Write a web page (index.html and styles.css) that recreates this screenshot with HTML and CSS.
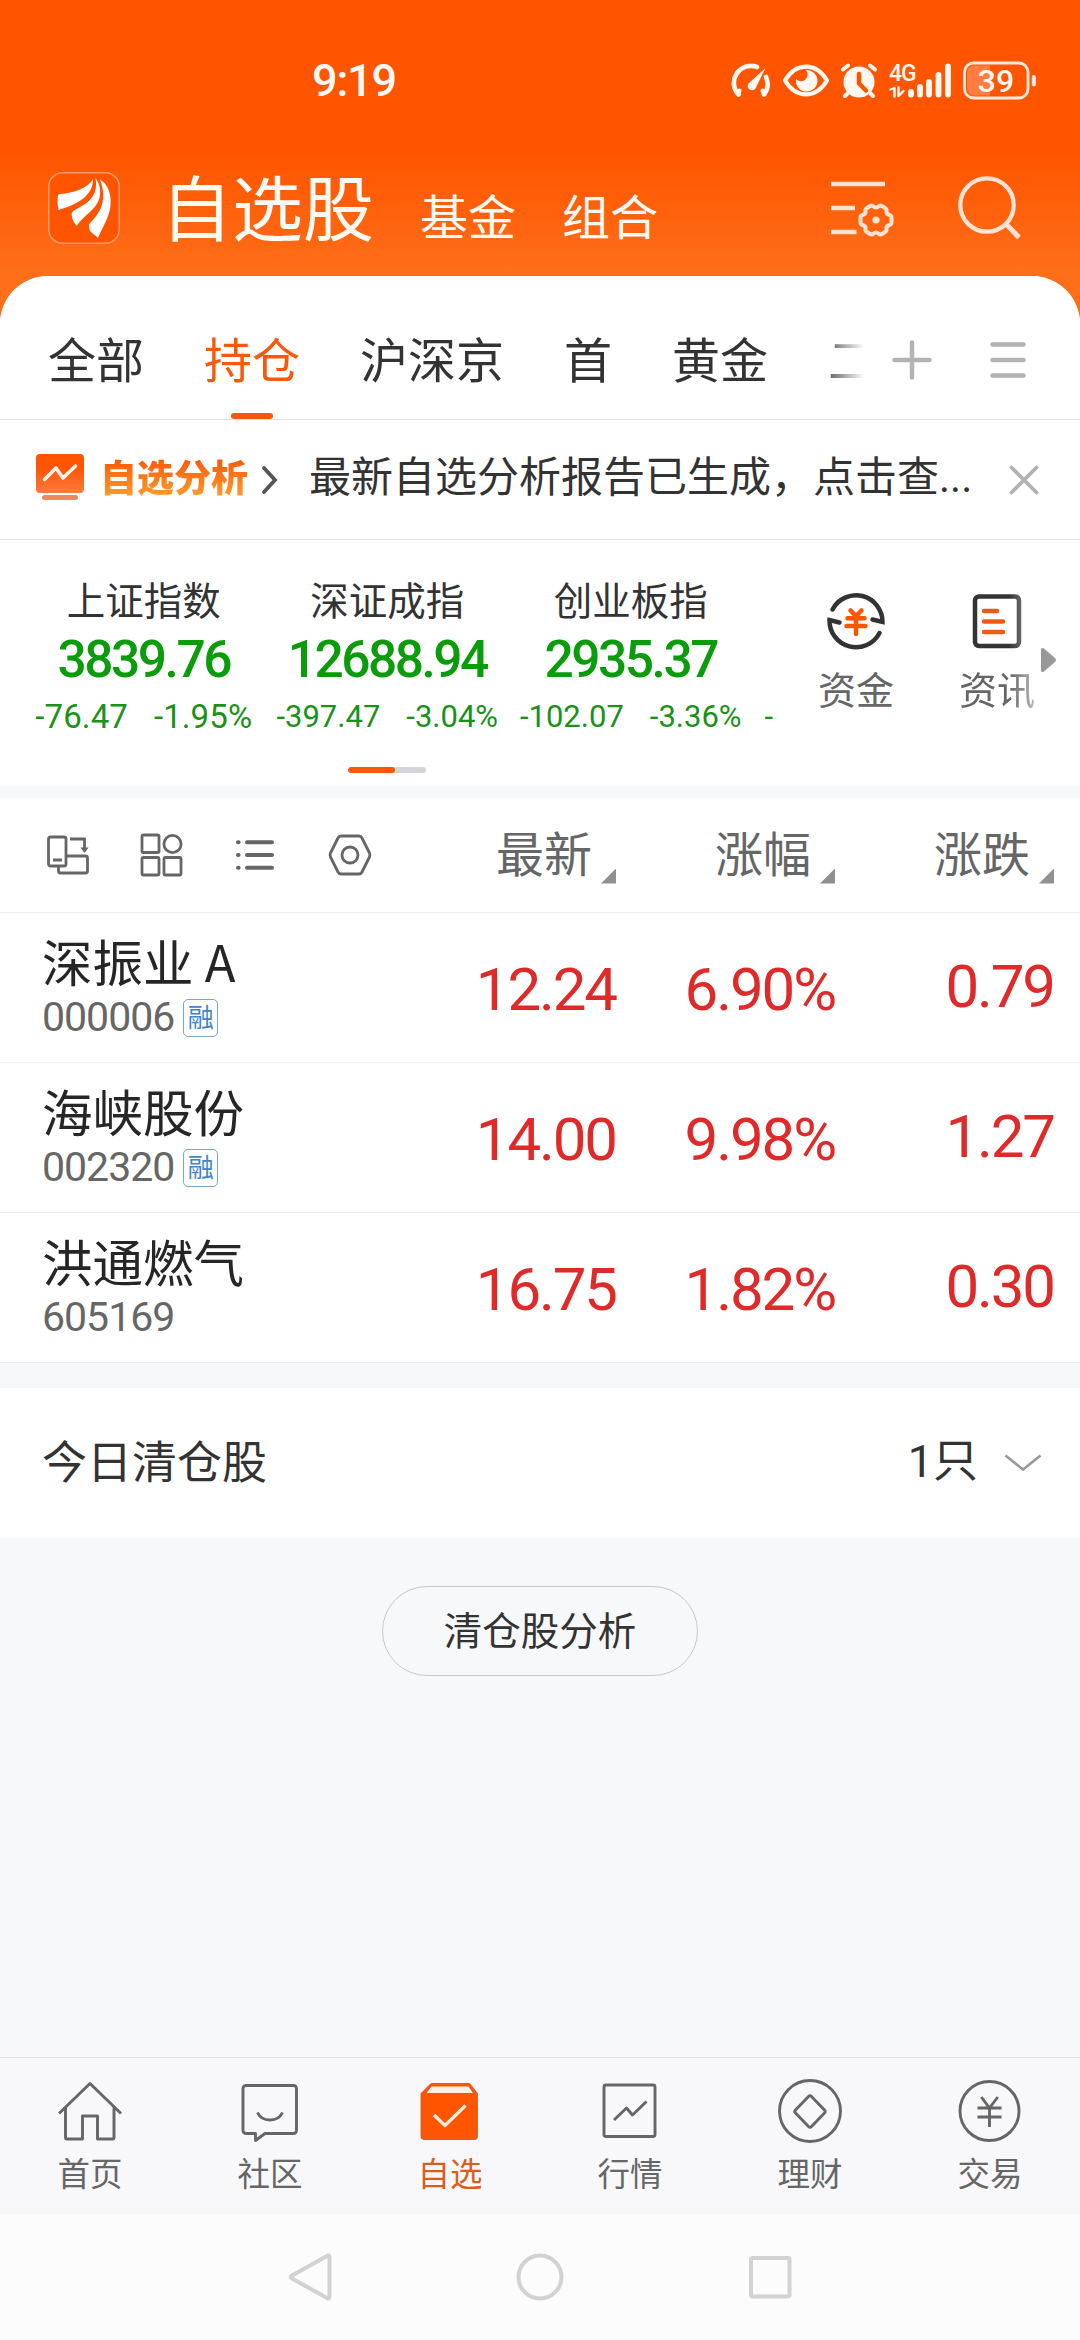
FILE: index.html
```
<!DOCTYPE html>
<html lang="zh-CN">
<head>
<meta charset="utf-8">
<title>自选股</title>
<link rel="stylesheet" href="styles.css">
</head>
<body>
<div class="app">
  <header class="header">
    <div class="status">
      <span class="time num">9:19</span>
      <div class="status-icons">
        <svg width="304" height="40" viewBox="732 61 304 40" fill="none" stroke="#fff8f0" stroke-linecap="round" stroke-linejoin="round">
          <path d="M757 67A17 17 0 0 0 738.5 94.5M766 77A17 17 0 0 1 764 94.5" stroke-width="4.6"/>
          <path d="M738.5 94.500l1-4M764 94.500l-1.500-4" stroke-width="4"/>
          <path d="M765.500 68L755.500 88.500A4 4 0 1 1 748.500 83.500Z" fill="#fff8f0" stroke="none"/>
          <path d="M785 80.500C796 62 816 62 827 80.500C816 99 796 99 785 80.500Z" stroke-width="4.200"/>
          <path d="M806 70A10.800 10.800 0 1 1 796 79A5.800 5.800 0 0 0 806 70Z" fill="#fff8f0" stroke="none"/>
          <circle cx="859" cy="82" r="15.500" fill="#fff8f0" stroke="none"/>
          <path d="M843 69.500L848 65.500M875 69.500L870 65.500M849 92l-4 4M869 92l4 4" stroke-width="4"/>
          <path d="M859 74V83.500L866 90.500" stroke="#ff5500" stroke-width="4.500"/>
          <path d="M911 92V94.500M920 87V94.500M929 82V94.500M938.500 75V94.500M948 66.500V94.500" stroke-width="5.800"/>
          <path d="M890.500 89.500L894.500 88V96.500M898.500 87.500V96L903.500 91" stroke-width="2.400"/>
          <rect x="964.500" y="63" width="63.500" height="35" rx="9" stroke-width="2.800" stroke="#ffe9dc"/>
          <path d="M990 65.500H974a7 7 0 0 0-7 7V88.500a7 7 0 0 0 7 7H990Z" fill="#ff7d40" stroke="none"/>
          <path d="M1033.800 77V84.500" stroke-width="4" stroke="#ffe9dc"/>
          <text class="svg-net" x="889" y="81">4G</text>
          <text class="svg-bat" x="996" y="92" text-anchor="middle">39</text>
        </svg>
      </div>
    </div>
    <div class="titlebar">
      <svg class="logo" width="72" height="72" viewBox="0 0 72 72">
        <rect x=".75" y=".75" width="70.500" height="70.500" rx="14" fill="#ff5500" stroke="#ff9a66" stroke-width="1.500"/>
        <g fill="#fff"><path d="M45 7C40 16 26 21 12 22Q10 22 9.700 25Q9 32 10.500 38C26 33 45 26 45 7Z"/><path d="M47.500 6C52 12 53 19 51.500 26C48 38 37 42 28.500 54C26 50 24 48 23.600 42Q23.500 40 26 38.500C38 32 51 26 47.500 6Z"/><path d="M52 7.500C60 12 63.500 22 62.500 34C61 46 54 56 50 66C46 61 41 62 41 53C43 48 63 36 52 7.500Z"/></g>
      </svg>
      <nav class="titles"><span class="title-main">自选股</span><span>基金</span><span>组合</span></nav>
      <div class="actions">
        <svg width="64" height="60" viewBox="830 178 64 60" fill="none" stroke="#ffe3d2" stroke-width="4.500"><path d="M831 184H885M831 208H855M831 232H856.500"/><circle cx="876" cy="220" r="3.600" fill="#ffe3d2" stroke="none"/><path stroke-linejoin="round" d="M870 206Q872 205 873.500 206.500Q876 208.500 878.500 206.500Q880 205 882 206L885 208Q887 209 886.500 211Q886 214 889.500 215Q891.500 215.500 891.500 218V222Q891.500 224.500 889.500 225Q886 226 886.500 229Q887 231 885 232L882 234Q880 235 878.500 233.500Q876 231.500 873.500 233.500Q872 235 870 234L867 232Q865 231 865.500 229Q866 226 862.500 225Q860.500 224.500 860.500 222V218Q860.500 215.500 862.500 215Q866 214 865.500 211Q865 209 867 208Z" stroke-width="4"/></svg>
        <svg width="66" height="66" viewBox="957 175 66 66" fill="none" stroke="#ffe3d2"><circle cx="987" cy="205" r="26.700" stroke-width="4.300"/><path d="M1006 224L1019 237.500" stroke-width="5"/></svg>
      </div>
    </div>
  </header>

  <main class="sheet">
    <div class="groups">
      <div class="group-list"><span>全部</span><span class="on">持仓</span><span>沪深京</span><span>首</span><span>黄金</span><span>二</span></div>
      <svg class="add" width="42" height="42" viewBox="0 0 42 42" stroke="#b3b3b3" stroke-width="4.500" stroke-linecap="round"><path d="M21 3.500V38.500M3.500 21H38.500"/></svg>
      <svg class="menu" width="36" height="36" viewBox="0 0 36 36" stroke="#b3b3b3" stroke-width="4.500" stroke-linecap="round"><path d="M2.500 2.500H33.500M2.500 18H33.500M2.500 33.500H33.500"/></svg>
    </div>

    <div class="notice">
      <svg width="48" height="48" viewBox="0 0 48 48" fill="none"><defs><linearGradient id="card" x1="0" y1="0" x2="0" y2="1"><stop offset=".35" stop-color="#ff5500"/><stop offset="1" stop-color="#ff7a40"/></linearGradient></defs><rect width="48" height="39" rx="4" fill="url(#card)"/><path d="M8.500 25.500L20 14L27 24L39.500 12" stroke="#fff3ea" stroke-width="3.600" stroke-linecap="round" stroke-linejoin="round"/><rect x="6" y="41" width="36" height="5" rx="2.500" fill="#ee8a58"/></svg>
      <span class="notice-tag">自选分析</span>
      <svg class="go" width="18" height="30" viewBox="0 0 18 30" fill="none" stroke="#555" stroke-width="3.800" stroke-linecap="round"><path d="M3 3L14 15L3 27"/></svg>
      <span class="notice-text">最新自选分析报告已生成，点击查<span class="num">...</span></span>
      <svg class="close" width="30" height="30" viewBox="0 0 30 30" stroke="#b3b3b3" stroke-width="3.800" stroke-linecap="round"><path d="M2.500 2.500L27.500 27.500M27.500 2.500L2.500 27.500"/></svg>
    </div>

    <section class="market">
      <div class="indices">
        <div class="index-track">
          <div class="index first"><span class="index-name">上证指数</span><span class="index-val num">3839.76</span><span class="index-chg num"><i>-76.47</i><i>-1.95%</i></span></div>
          <div class="index"><span class="index-name">深证成指</span><span class="index-val num">12688.94</span><span class="index-chg num"><i>-397.47</i><i>-3.04%</i></span></div>
          <div class="index"><span class="index-name">创业板指</span><span class="index-val num">2935.37</span><span class="index-chg num"><i>-102.07</i><i>-3.36%</i></span></div>
          <div class="index peek"><span class="index-chg num"><i>-</i></span></div>
        </div>
        <div class="pager"><b></b></div>
      </div>
      <div class="quick">
        <div class="quick-item"><svg width="64" height="64" viewBox="0 0 64 64" fill="none" stroke="#333" stroke-width="4.500" stroke-linejoin="miter" stroke-linecap="round"><path d="M8.500 20.500A26.500 26.500 0 0 1 58.500 33L48.500 30.500M55.500 44A26.500 26.500 0 0 1 5.500 31L15.500 33.500"/><path stroke="#ff5500" d="M26.500 21.500L32 27L37.500 21.500M32 27V45M23.500 29.300H40.500M22.500 37H41.500"/></svg><span>资金</span></div>
        <div class="quick-item fade"><svg width="64" height="64" viewBox="0 0 64 64" fill="none" stroke-linecap="round" stroke-width="4.500"><rect x="10" y="7.500" width="44" height="49.500" rx="4" stroke="#333"/><path stroke="#ee5a14" d="M19 22H32M19 32.500H38M19 43H38"/></svg><span>资讯</span></div>
        <svg width="16" height="26" viewBox="0 0 16 26" fill="#999"><path d="M0 3Q0 0 3 1.500L14 11Q16 13 14 15L3 24.500Q0 26 0 23Z"/></svg>
      </div>
    </section>

    <div class="thead grid">
      <div class="tools">
        <svg width="44" height="42" viewBox="0 0 44 42" fill="none" stroke="#666" stroke-width="2.800"><rect x="2.500" y="3" width="17.500" height="29" rx="2"/><path d="M7 26H16M12.500 33V37a2 2 0 0 0 2 2H39.500a2 2 0 0 0 2-2V24a2 2 0 0 0-2-2H20.500M24 5H38.500V14"/><path d="M34.500 13.500H42.500L38.500 19Z" fill="#666" stroke="none"/></svg>
        <svg width="44" height="44" viewBox="0 0 44 44" fill="none" stroke="#666" stroke-width="2.800"><rect x="2" y="2" width="17" height="17.500" rx="1.500"/><circle cx="32.500" cy="11" r="8.600"/><rect x="2" y="24.500" width="17" height="17.500" rx="1.500"/><rect x="24" y="24.500" width="17" height="17.500" rx="1.500"/></svg>
        <svg width="44" height="44" viewBox="0 0 44 44" fill="none" stroke="#666" stroke-width="4" stroke-linecap="round"><path d="M13 9.300H38M13 22H38M13 34.800H38M4 9.300h.6M4 22h.6M4 34.800h.6"/></svg>
        <svg width="44" height="44" viewBox="0 0 44 44" fill="none" stroke="#666" stroke-width="2.800" stroke-linejoin="round"><path d="M13 3H31Q33 3 34 5L41.500 20Q42.300 22 41.500 24L34 39Q33 41 31 41H13Q11 41 10 39L2.500 24Q1.700 22 2.500 20L10 5Q11 3 13 3Z"/><circle cx="22" cy="22" r="8"/></svg>
      </div>
      <div class="th">最新<b></b></div><div class="th">涨幅<b></b></div><div class="th">涨跌<b></b></div>
    </div>
    <div class="row grid"><div><div class="name">深振业 A</div><div class="code num">000006<em>融</em></div></div><span class="v num">12.24</span><span class="v num">6.90%</span><span class="v num up">0.79</span></div>
    <div class="row grid"><div><div class="name">海峡股份</div><div class="code num">002320<em>融</em></div></div><span class="v num">14.00</span><span class="v num">9.98%</span><span class="v num up">1.27</span></div>
    <div class="row grid"><div><div class="name">洪通燃气</div><div class="code num">605169</div></div><span class="v num">16.75</span><span class="v num">1.82%</span><span class="v num up">0.30</span></div>

    <div class="cleared"><span>今日清仓股</span><span class="count num">1只</span><svg width="38" height="18" viewBox="0 0 38 18" fill="none" stroke="#999" stroke-width="2.600"><path d="M1.500 1.500L19 15.500L36.500 1.500"/></svg></div>
    <div class="empty"><button class="analyse">清仓股分析</button></div>
  </main>

  <nav class="tabbar">
    <div class="tab"><svg width="64" height="64" viewBox="0 0 64 64"><path d="M1 34.500L32 4.500L63 34.500M7.500 28.500V59Q7.500 60 8.500 60H24.500V37H39.500V60H55Q56 60 56 59V28.500"/></svg><span>首页</span></div>
    <div class="tab"><svg width="64" height="64" viewBox="0 0 64 64"><path d="M8 6.500H55.500a3 3 0 0 1 3 3V51.500a3 3 0 0 1-3 3H27L17.500 61.500V54.500H8a3 3 0 0 1-3-3V9.500a3 3 0 0 1 3-3Z"/><path d="M19.500 33.500C24 43.500 40 43.500 44.500 33.500"/></svg><span>社区</span></div>
    <div class="tab on"><svg width="64" height="64" viewBox="0 0 64 64"><path d="M13.500 5.500H51L58.500 15V57Q58.500 59.500 56 59.500H6.500Q4 59.500 4 57V15Z" class="box"/><path d="M13.500 7.500H50.500L55 14H8.500Z" class="lid"/><path d="M16 36L27 46.500L47.500 26.500" class="tick"/></svg><span>自选</span></div>
    <div class="tab"><svg width="64" height="64" viewBox="0 0 64 64"><rect x="6" y="6" width="51" height="51.500" rx="2"/><path d="M16 41L28.500 29L34.500 36L48.500 22.500"/></svg><span>行情</span></div>
    <div class="tab"><svg width="64" height="64" viewBox="0 0 64 64"><circle cx="32" cy="32" r="30.500"/><path d="M30.500 17.500Q32 16 33.500 17.500L46.500 31Q48 32.500 46.500 34L33.500 47.500Q32 49 30.500 47.500L17.500 34Q16 32.500 17.500 31Z"/></svg><span>理财</span></div>
    <div class="tab"><svg width="64" height="64" viewBox="0 0 64 64"><circle cx="31.500" cy="32" r="29.500"/><path d="M23.300 18L31.500 29L39.800 18M31.500 29V48M19.500 29H43.500M19.500 38H43.500"/></svg><span>交易</span></div>
  </nav>
  <div class="sysnav">
    <svg width="48" height="48" viewBox="0 0 48 48"><path d="M43.500 4Q43.500 1.500 41 3L6 22.500Q3.500 24 6 25.500L41 45Q43.500 46.500 43.500 44Z"/></svg>
    <svg width="48" height="48" viewBox="0 0 48 48"><circle cx="24" cy="24" r="21.500"/></svg>
    <svg width="48" height="48" viewBox="0 0 48 48"><rect x="5" y="5" width="38.500" height="38.500" rx="2"/></svg>
  </div>
</div>
</body>
</html>
```
FILE: styles.css
```
* { box-sizing: border-box; }
body { margin: 0; font-family: "Noto Sans CJK SC", sans-serif; color: #333; }
svg { display: block; flex: none; overflow: visible; }
i, em { font-style: normal; }
.num { font-family: Roboto, "Noto Sans CJK SC", sans-serif; }
.app { width: 1080px; height: 2340px; display: flex; flex-direction: column; overflow: hidden; background: #f7f8fa; }

.header { height: 340px; margin-bottom: -64px; flex: none; color: #fffaf3; background: linear-gradient(#ff5500 0, #ff5500 155px, #ff6f1a 276px); }
.status { height: 110px; padding: 52px 44px 0 312px; display: flex; justify-content: space-between; align-items: center; }
.time { font-size: 45px; line-height: 58px; font-weight: 500; letter-spacing: -1.2px; }
.svg-net { font: 500 23px Roboto, sans-serif; fill: #fff8f0; stroke: none; letter-spacing: -1px; }
.svg-bat { font: 500 32px Roboto, sans-serif; fill: #fff8f0; stroke: none; }
.titlebar { height: 166px; padding: 30px 57px 0 48px; display: flex; align-items: center; }
.titles { display: flex; align-items: baseline; gap: 46px; margin: 0 0 -1px 41px; font-size: 48px; line-height: 70px; }
.title-main { font-size: 71px; }
.actions { display: flex; align-items: center; gap: 63px; margin-left: auto; }

.sheet { flex: 1; display: flex; flex-direction: column; background: #f7f8fa; border-radius: 48px 48px 0 0; overflow: hidden; }
.groups { height: 144px; flex: none; display: flex; align-items: center; padding: 0 54px 0 48px; background: #fff; border-bottom: 1px solid #e3e4e6; }
.group-list { display: flex; gap: 60px; width: 816px; height: 143px; overflow: hidden; font-size: 48px; line-height: 162px; -webkit-mask-image: linear-gradient(90deg, #000 770px, transparent 816px); mask-image: linear-gradient(90deg, #000 770px, transparent 816px); }
.group-list span { flex: none; display: flex; flex-direction: column; align-items: center; height: 143px; }
.group-list .on { color: #f9580a; }
.group-list .on::after { content: ""; width: 42px; height: 6px; margin-top: -25px; border-radius: 3px; background: #f4580c; }
.add { margin: 24px 0 0 27px; }
.menu { margin: 24px 0 0 auto; }

.notice { height: 120px; flex: none; display: flex; align-items: center; padding: 0 41px 0 36px; background: #fff; border-bottom: 1px solid #e6e6e6; }
.notice > svg:first-child { margin-top: -4px; }
.notice-tag { margin: -7px 0 0 16px; font-size: 37px; line-height: 50px; font-weight: 900; background: linear-gradient(#f95d0b 20%, #ff9a2a 90%); -webkit-background-clip: text; background-clip: text; color: transparent; }
.go { margin-left: 13px; }
.notice-text { margin: -7px 0 0 30px; font-size: 42px; line-height: 56px; white-space: nowrap; }
.close { margin: 1px 0 0 auto; }

.market { height: 246px; flex: none; display: flex; background: #fff; }
.indices { width: 774px; padding: 38px 0 0 22px; overflow: hidden; display: flex; flex-direction: column; }
.index-track { display: flex; }
.index { width: 243.5px; flex: none; display: flex; flex-direction: column; align-items: center; }
.index-name { font-size: 38.5px; line-height: 40px; }
.index-val { margin-top: 12px; font-size: 51.5px; line-height: 60px; font-weight: 500; letter-spacing: -2.5px; color: #0a9c0a; }
.index-chg { display: flex; gap: 26px; margin-top: 11px; font-size: 31px; line-height: 32px; color: #1a9118; letter-spacing: 0; }
.first .index-chg { font-size: 33px; letter-spacing: .1px; }
.peek { align-items: flex-start; padding: 112px 0 0 12px; }
.pager { width: 78px; height: 6px; margin: 34px 0 0 326px; border-radius: 3px; background: #d2d5da; overflow: hidden; }
.pager b { display: block; width: 47px; height: 6px; border-radius: 3px; background: #f9580a; }
.quick { display: flex; align-items: flex-start; padding: 49px 0 0 43px; font-size: 38px; line-height: 40px; color: #666; }
.quick-item { width: 78px; display: flex; flex-direction: column; align-items: center; gap: 15px; }
.quick-item + .quick-item { margin-left: 63px; }
.fade { -webkit-mask-image: linear-gradient(90deg, #000 65%, rgba(0,0,0,.45)); mask-image: linear-gradient(90deg, #000 65%, rgba(0,0,0,.45)); }
.quick > svg { margin: 58px 0 0 5px; }

.grid { display: grid; grid-template-columns: 397px 219px 219px 219px; background: #fff; border-bottom: 1px solid #ececec; flex: none; }
.thead { height: 115px; margin-top: 12px; align-items: center; }
.tools { display: flex; gap: 50px; padding-left: 46px; align-items: center; }
.th { display: flex; justify-content: flex-end; align-items: flex-end; gap: 9px; padding-bottom: 9px; font-size: 48px; line-height: 64px; color: #666; }
.th b { width: 15px; height: 15px; margin-bottom: -1px; background: #8f8f95; clip-path: polygon(100% 0, 100% 100%, 0 100%); }
.row { height: 150px; }
.row > div { padding: 21px 0 0 42px; }
.name { font-size: 50.5px; line-height: 53px; color: #262626; }
.code { display: flex; align-items: center; gap: 9px; height: 40px; margin-top: 10px; font-size: 41px; line-height: 40px; letter-spacing: -1px; color: #666; }
.code em { width: 35px; height: 38px; margin-top: 1px; border: 1.5px solid #79a6d3; border-radius: 5px; font-size: 26px; line-height: 36px; letter-spacing: 0; text-align: center; color: #4284c8; }
.v { text-align: right; font-size: 60px; line-height: 72px; padding-top: 41px; letter-spacing: -2.1px; color: #e02a2a; }
.up { padding-top: 38px; }

.cleared { height: 150px; flex: none; margin-top: 25px; padding: 0 38px 0 42px; display: flex; align-items: center; font-size: 45px; line-height: 60px; background: #fff; }
.cleared span { margin-top: -7px; }
.cleared .count { margin: -2px 0 0 auto; padding-right: 26px; }
.empty { display: flex; justify-content: center; padding-top: 48px; }
.analyse { width: 316px; height: 90px; padding: 0 0 6px; border: 1.5px solid #c6c7c9; border-radius: 45px; background: transparent; font: 38.5px "Noto Sans CJK SC", sans-serif; color: #333; }

.tabbar { height: 157px; flex: none; display: grid; grid-template-columns: repeat(6, 1fr); background: #f8f8fa; border-top: 1px solid #dedfe1; font-size: 32.5px; line-height: 40px; color: #666; }
.tab { display: flex; flex-direction: column; align-items: center; padding-top: 21px; gap: 9px; }
.tab svg { fill: none; stroke: #666; stroke-width: 2.900; stroke-linejoin: round; }
.tab.on { color: #dd5c1c; }
.tab .box { fill: #ff5500; stroke: #ee5a14; }
.tab .lid { fill: #fff0e4; stroke: none; }
.tab .tick { stroke: #ffeedd; stroke-width: 3.2; }
.sysnav { height: 126px; flex: none; display: flex; gap: 182px; justify-content: center; align-items: center; background: #fcfcfc; }
.sysnav svg { fill: none; stroke: #d2d2d2; stroke-width: 4; }
```
